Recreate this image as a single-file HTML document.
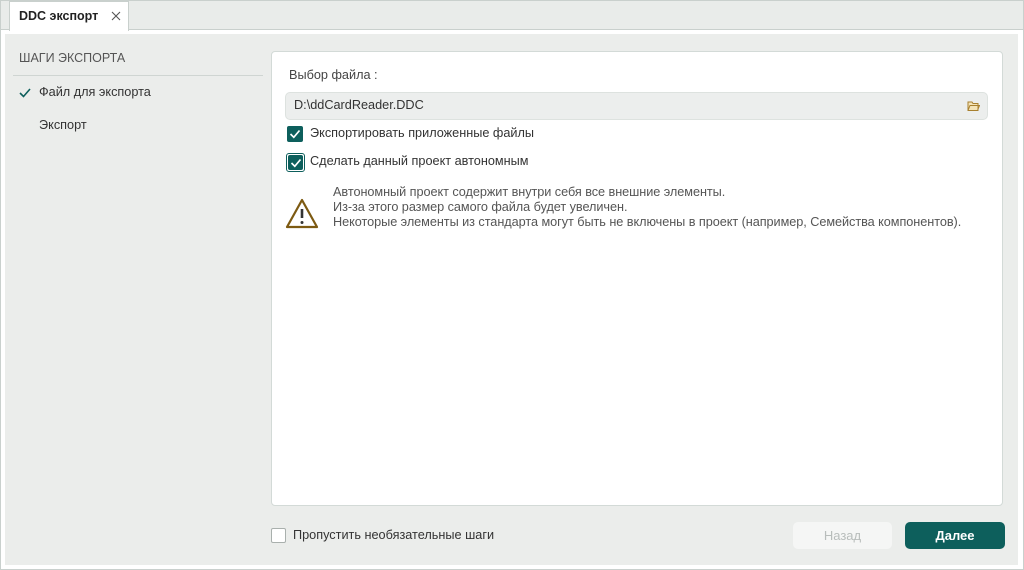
<!DOCTYPE html>
<html><head><meta charset="utf-8"><style>
*{box-sizing:border-box;margin:0;padding:0}
body{width:1024px;height:570px;background:#fff;font-family:"Liberation Sans","Noto Sans CJK SC",sans-serif;font-size:13px;color:#333;position:relative;overflow:hidden}
.frame{position:absolute;left:0;top:0;width:1024px;height:570px;border:1px solid #c9d0cd}
.tabbar{position:absolute;left:1px;top:1px;width:1022px;height:29px;background:#e9ecea;border-bottom:1px solid #c9d0cd}
.tab{position:absolute;left:9px;top:1px;width:120px;height:30px;background:#fff;border:1px solid #c9d0cd;border-bottom:none}
.tab b{position:absolute;left:9px;top:7px;font-size:12.5px;color:#222}
.content{position:absolute;left:5px;top:34px;width:1013px;height:531px;background:#ebedeb}
.abs{position:absolute}
.panel{position:absolute;left:271px;top:51px;width:732px;height:455px;background:#fff;border:1px solid #d3dad7;border-radius:4px}
.cb{position:absolute;width:16px;height:16px;background:#0d5f5c;border-radius:2px}
.cb svg{position:absolute;left:2px;top:2px}
</style></head><body>
<div class="frame"></div>
<div class="tabbar"></div>
<div class="tab"><b>DDC экспорт</b><svg class="abs" style="left:101px;top:9px" width="10" height="10"><path d="M1 1 L9 9 M9 1 L1 9" stroke="#555" stroke-width="1.1"/></svg></div>
<div class="content"></div>
<div class="abs" style="left:19px;top:51px;color:#555;font-size:12.5px">ШАГИ ЭКСПОРТА</div>
<div class="abs" style="left:13px;top:75px;width:250px;height:1px;background:#cfd5d2"></div>
<svg class="abs" style="left:19px;top:88px" width="12" height="10"><path d="M1 5 L4.5 8.5 L11 1" stroke="#0d5f5c" stroke-width="1.6" fill="none"/></svg>
<div class="abs" style="left:39px;top:85px;font-size:12.7px">Файл для экспорта</div>
<div class="abs" style="left:39px;top:118px;font-size:12.7px">Экспорт</div>
<div class="panel"></div>
<div class="abs" style="left:289px;top:68px;color:#444;font-size:12.7px">Выбор файла :</div>
<div class="abs" style="left:285px;top:92px;width:703px;height:28px;background:#eceeed;border:1px solid #dde2df;border-radius:5px"></div>
<div class="abs" style="left:294px;top:98px;color:#333;font-size:12.7px">D:\ddCardReader.DDC</div>
<svg class="abs" style="left:967px;top:100px" width="13" height="12"><path d="M1 2 h4 l1 1.5 h5 v7 h-10z M1 10.5 l2 -5 h9.5 l-2 5" stroke="#a8802f" stroke-width="1" fill="#f3e3b8"/></svg>
<div class="cb" style="left:287px;top:126px"><svg width="12" height="12"><path d="M1.5 6 L4.8 9.3 L10.5 2.5" stroke="#fff" stroke-width="1.7" fill="none"/></svg></div>
<div class="abs" style="left:310px;top:126px;font-size:12.7px">Экспортировать приложенные файлы</div>
<div class="abs" style="left:286px;top:153px;width:19px;height:19px;border:1px solid #0d5f5c;border-radius:3px"></div>
<div class="cb" style="left:288px;top:155px;width:15px;height:15px"><svg width="12" height="12"><path d="M1.5 6 L4.8 9.3 L10.5 2.5" stroke="#fff" stroke-width="1.7" fill="none"/></svg></div>
<div class="abs" style="left:310px;top:154px;font-size:12.7px">Сделать данный проект автономным</div>
<svg class="abs" style="left:285px;top:198px" width="34" height="31"><path d="M17 2 L32 29 H2 Z" stroke="#7d5a12" stroke-width="2.2" fill="none" stroke-linejoin="round"/><path d="M17 11 V20" stroke="#333" stroke-width="2.6"/><circle cx="17" cy="24.5" r="1.5" fill="#333"/></svg>
<div class="abs" style="left:333px;top:185px;color:#555;line-height:15px;font-size:12.7px;letter-spacing:-0.05px">Автономный проект содержит внутри себя все внешние элементы.<br>Из-за этого размер самого файла будет увеличен.<br>Некоторые элементы из стандарта могут быть не включены в проект (например, Семейства компонентов).</div>
<div class="abs" style="left:271px;top:528px;width:15px;height:15px;background:#fff;border:1px solid #a9b0ad;border-radius:2px"></div>
<div class="abs" style="left:293px;top:528px;font-size:12.7px">Пропустить необязательные шаги</div>
<div class="abs" style="left:793px;top:522px;width:99px;height:27px;background:#f5f6f5;border-radius:5px;color:#b8bdbb;text-align:center;line-height:27px">Назад</div>
<div class="abs" style="left:905px;top:522px;width:100px;height:27px;background:#0d5f5c;border-radius:5px;color:#fff;text-align:center;line-height:27px;font-weight:bold">Далее</div>
</body></html>
